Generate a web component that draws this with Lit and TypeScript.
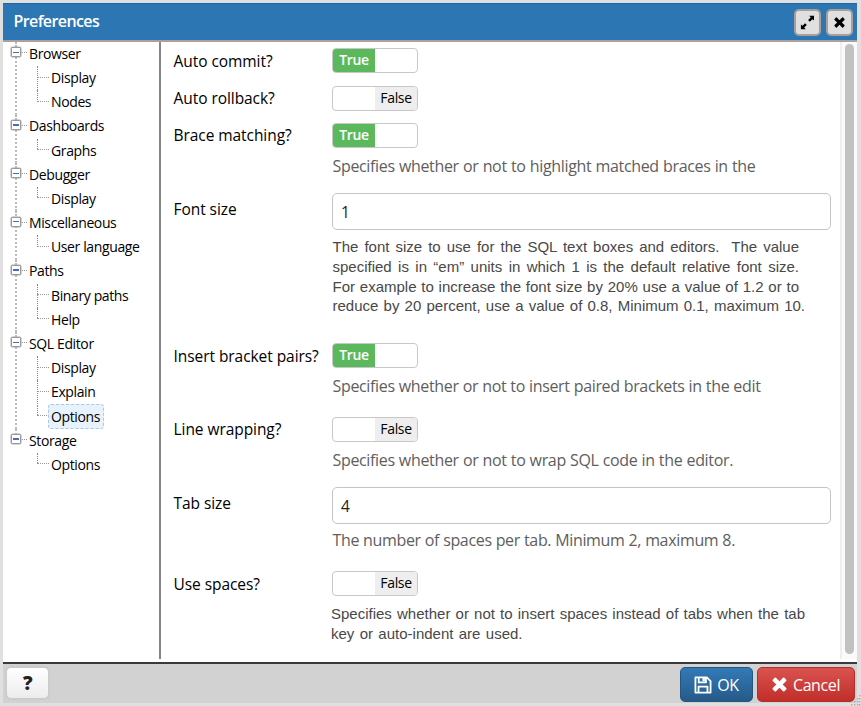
import { LitElement, html, css, svg } from "lit";
import { customElement, property } from "lit/decorators.js";
import { classMap } from "lit/directives/class-map.js";

interface Group {
  name: string;
  items: string[];
  active?: string;
}

interface Pref {
  label: string;
  size: string;
  kind: "switch" | "text";
  value: boolean | string;
  help?: string[];
  helpStyle?: string;
}

const GROUPS: Group[] = [
  { name: "Browser", items: ["Display", "Nodes"] },
  { name: "Dashboards", items: ["Graphs"] },
  { name: "Debugger", items: ["Display"] },
  { name: "Miscellaneous", items: ["User language"] },
  { name: "Paths", items: ["Binary paths", "Help"] },
  { name: "SQL Editor", items: ["Display", "Explain", "Options"], active: "Options" },
  { name: "Storage", items: ["Options"] },
];

const PREFS: Pref[] = [
  { label: "Auto commit?", size: "r1", kind: "switch", value: true },
  { label: "Auto rollback?", size: "r2", kind: "switch", value: false },
  { label: "Brace matching?", size: "r3", kind: "switch", value: true,
    help: ["Specifies whether or not to highlight matched braces in the"], helpStyle: "open w423" },
  { label: "Font size", size: "r4", kind: "text", value: "1",
    help: [
      "The font size to use for the SQL text boxes and editors.\u00a0 The value",
      "specified is in “em” units in which 1 is the default relative font size.",
      "For example to increase the font size by 20% use a value of 1.2 or to",
      "reduce by 20 percent, use a value of 0.8, Minimum 0.1, maximum 10.",
    ], helpStyle: "sans w466" },
  { label: "Insert bracket pairs?", size: "r5", kind: "switch", value: true,
    help: ["Specifies whether or not to insert paired brackets in the edit"], helpStyle: "open w428" },
  { label: "Line wrapping?", size: "r6", kind: "switch", value: false,
    help: ["Specifies whether or not to wrap SQL code in the editor."], helpStyle: "open w401" },
  { label: "Tab size", size: "r7", kind: "text", value: "4",
    help: ["The number of spaces per tab. Minimum 2, maximum 8."], helpStyle: "open w403" },
  { label: "Use spaces?", size: "r8", kind: "switch", value: false,
    help: [
      "Specifies whether or not to insert spaces instead of tabs when the tab",
      "key or auto-indent are used.",
    ], helpStyle: "sans w474" },
];

@customElement("pref-tree")
export class PrefTree extends LitElement {
  static styles = css`
    :host { display: block; font: 14px/24.18px "Open Sans", sans-serif; letter-spacing: -.38px; color: #000; }
    .group { position: relative; }
    .group::before {
      content: ""; position: absolute; left: 12px; top: 0; bottom: 0;
      border-left: 2px dotted #bbb;
    }
    .group:last-child::before { bottom: auto; height: 10px; }
    .head { display: flex; height: 24.18px; position: relative; }
    .box {
      box-sizing: border-box; width: 10px; height: 10px; margin: 5.4px 0 0 8px;
      border: 1.5px solid #999; border-radius: 1.5px; background: #fff;
      box-shadow: 0 0 0 .5px #aaa; display: flex; align-items: center; justify-content: center;
    }
    .box::after { content: ""; width: 6px; height: 1.5px; background: #4a6cc0; }
    .dash { width: 5px; margin: 10.4px 0 0 1px; height: 0; border-top: 1px dotted #999; }
    .items { margin-left: 34px; }
    .item { display: flex; height: 24.18px; position: relative; }
    .item::before {
      content: ""; position: absolute; left: 0; top: 0; height: 24px;
      border-left: 1px dotted #888;
    }
    .item:last-child::before { height: 10px; }
    .item .dash { width: 12px; margin: 10.4px 0 0 0; }
    .name { padding: 0 2px; white-space: nowrap; margin-top: -.2px; }
    .item .name { padding: 0 2px; }
    .item .active {
      box-sizing: border-box; height: 25px; line-height: 23px; margin: -.6px 0 0 -1px; padding-right: 3px;
      border: 1px dashed #a5c8f0; border-radius: 3px; background: #e7f2fd;
    }
  `;
  render() {
    return GROUPS.map((g) => html`
      <div class="group">
        <div class="head"><span class="box"></span><span class="dash"></span><span class="name">${g.name}</span></div>
        <div class="items">
          ${g.items.map((i) => html`<div class="item"><span class="dash"></span><span
            class=${classMap({ name: true, active: g.active === i })}>${i}</span></div>`)}
        </div>
      </div>`);
  }
}

@customElement("pref-switch")
export class PrefSwitch extends LitElement {
  @property({ type: Boolean }) on = false;
  static styles = css`
    :host { display: block; }
    .switch {
      box-sizing: border-box; width: 86px; height: 25px; display: grid;
      grid-template-columns: 1fr 1fr; border: 1px solid #c8c8c8; border-radius: 4px;
      overflow: hidden; background: #fff; font: 14px/22px "Open Sans", sans-serif; letter-spacing: -.35px;
    }
    .half { text-align: center; }
    .true { background: #5cb85c; color: #fff; font-weight: 600; }
    .false { background: #eee; color: #000; }
  `;
  render() {
    return html`<div class="switch">${this.on
      ? html`<span class="half true">True</span><span class="half"></span>`
      : html`<span class="half"></span><span class="half false">False</span>`}</div>`;
  }
}

@customElement("app-root")
export class AppRoot extends LitElement {
  static styles = css`
    :host { display: block; height: 706px; background: #e0e0e0; font-family: "Open Sans", sans-serif; }
    * { box-sizing: border-box; }
    .page { height: 706px; padding: 3px 4px 3px 3px; position: relative; }
    .window { height: 700px; display: flex; flex-direction: column; background: #fff; }
    .title {
      height: 39px; display: flex; align-items: center; background: #2c76b4; color: #fff;
      border-top: 1px solid #1668ab; border-bottom: 2px solid #aaa19e; padding: 0 4px 0 10.5px; flex: none;
    }
    .title h1 { flex: 1; font-size: 16px; line-height: 20px; font-weight: 600; letter-spacing: -.6px; margin: 0 0 3px; }
    .tool {
      width: 27px; height: 27px; margin: 1px 0 0 5px; background: #e0e0e0; border: 2px solid #a79f9b;
      border-radius: 5px; display: grid; place-items: center;
    }
    .body { flex: 1; min-height: 0; display: flex; }
    .side { width: 156px; height: 617px; flex: none; }
    .split { width: 2px; height: 617px; background: #858585; flex: none; }
    .form { flex: 1; padding: 6px 0 0 12.5px; overflow: hidden; }
    .scroll { width: 17px; height: 617px; border-left: 2px solid #eee; background: #fafafa; padding: 2px 0 0 3px; flex: none; }
    .thumb { width: 9px; height: 610px; border-radius: 5px; background: #c1c1c1; }
    .row { display: grid; grid-template-columns: 158.5px 1fr; align-items: start; }
    .label { font-size: 15.5px; line-height: 20px; font-weight: 500; letter-spacing: -.06px; color: #000; margin-top: 2.5px; white-space: nowrap; }
    .r1 { height: 37.6px; } .r2 { height: 37.4px; } .r3 { height: 69.6px; } .r4 { height: 150.6px; }
    .r5 { height: 73.8px; } .r6 { height: 69.6px; } .r7 { height: 84.5px; } .r8 { height: 80px; }
    .r4 .label, .r7 .label { margin-top: 6px; }
    .input {
      width: 499px; height: 37px; border: 1px solid #c4c4c4; border-radius: 5px; padding: 0 8px;
      font-size: 15.5px; line-height: 37px; color: #222;
    }
    .help { white-space: nowrap; padding-left: .5px; }
    .line { text-align-last: justify; }
    .open { font-size: 16px; line-height: 20px; letter-spacing: -.34px; color: #5e5e5e; margin-top: 8px; }
    .r7 .open { margin-top: 6.6px; }
    .sans { font: 15px/19.8px "Liberation Sans", sans-serif; color: #484848; margin-top: 7.4px; }
    .w423 { width: 423.5px; } .w428 { width: 428.5px; overflow: hidden; } .w401 { width: 401px; } .w403 { width: 403px; }
    .w466 { width: 467px; } .w474 { width: 474.5px; margin-left: -1.5px; margin-top: 8px; }
    .w466 .line:last-child { width: 472.5px; }
    .w474 .line:last-child { width: 191.5px; }
    .foot {
      height: 41px; border-top: 2px solid #3a3a3a; background: #d2d2d2; padding: 3px 2px 0 3px;
      display: flex; gap: 4px; flex: none;
    }
    .btn {
      height: 35px; border-radius: 5px; display: flex; align-items: center; justify-content: center;
      color: #fff; font-size: 16px; line-height: 22px; letter-spacing: -.4px;
    }
    .question {
      width: 43px; height: 32px; color: #222; border: 1px solid #ccc; font-size: 19px; font-weight: 800;
      background: linear-gradient(#fff, #ececec); margin-right: auto; box-shadow: 0 0 2px #bbb;
    }
    .ok { width: 73px; gap: 5px; border: 1px solid #245580; background: linear-gradient(#337ab7, #265a88); }
    .cancel { width: 98px; gap: 6px; border: 1px solid #b92c28; background: linear-gradient(#d9534f, #c12e2a); }
    .grip { position: absolute; right: 0; bottom: 0; }
    svg { display: block; }
  `;

  cross(size: number, color: string) {
    return html`<svg width=${size} height=${size} viewBox="0 0 16 16"><path fill=${color}
      d="M4.2.8 8 4.6 11.8.8Q12.5.2 13.2.8L15.2 2.8Q15.8 3.5 15.2 4.2L11.4 8 15.2 11.8Q15.8 12.5 15.2 13.2L13.2 15.2Q12.5 15.8 11.8 15.2L8 11.4 4.2 15.2Q3.5 15.8 2.8 15.2L.8 13.2Q.2 12.5.8 11.8L4.6 8 .8 4.2Q.2 3.5.8 2.8L2.8.8Q3.5.2 4.2.8Z"/></svg>`;
  }

  render() {
    const dots = [[8, 0], [6, 3], [8, 3], [3, 6], [6, 6], [8, 6], [0, 9], [3, 9], [6, 9], [8, 9]];
    return html`
      <div class="page">
        <div class="window">
          <div class="title">
            <h1>Preferences</h1>
            <div class="tool">
              <svg width="15" height="15" viewBox="0 0 15 15"><path fill="#000"
                d="M9.2.8H14v4.8l-1.6-1.4-2.6 2.6-1.7-1.7 2.6-2.6zM.9 9.4l1.6 1.4 2.6-2.6 1.7 1.7-2.6 2.6 1.5 1.7H.9z"/></svg>
            </div>
            <div class="tool">${this.cross(11, "#000")}</div>
          </div>
          <div class="body">
            <pref-tree class="side"></pref-tree>
            <div class="split"></div>
            <div class="form">
              ${PREFS.map((p) => html`
                <div class="row ${p.size}">
                  <div class="label">${p.label}</div>
                  <div>
                    ${p.kind === "switch"
                      ? html`<pref-switch ?on=${p.value === true}></pref-switch>`
                      : html`<div class="input">${p.value}</div>`}
                    ${p.help ? html`<div class="help ${p.helpStyle}">${p.help.map((l) => html`<div class="line">${l}</div>`)}</div>` : ""}
                  </div>
                </div>`)}
            </div>
            <div class="scroll"><div class="thumb"></div></div>
          </div>
          <div class="foot">
            <div class="btn question">?</div>
            <div class="btn ok">
              <svg width="18" height="18" viewBox="0 0 19 19" fill="none" stroke="#fff" stroke-width="1.9" stroke-linejoin="round">
                <path d="M1.5 1.5h12l4 4v12h-16zM4.8 17v-5.8h9.4V17M5 2v4.8h7.6V2"/><path d="M8.9 2h2.6v3.6H8.9z" fill="#fff" stroke="none"/></svg>
              <span>OK</span>
            </div>
            <div class="btn cancel">${this.cross(15, "#fff")}<span>Cancel</span></div>
          </div>
        </div>
        <svg class="grip" width="10" height="11">${dots.map(([x, y]) => svg`<rect x=${x} y=${y} width="1.4" height="1.4" fill="#aaa"/>`)}</svg>
      </div>`;
  }
}
